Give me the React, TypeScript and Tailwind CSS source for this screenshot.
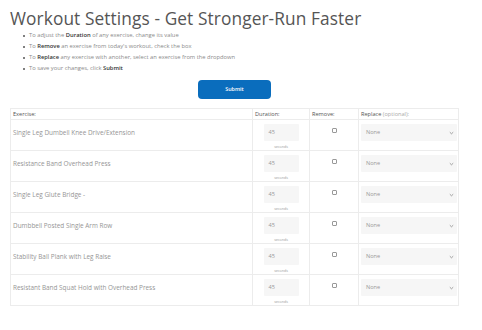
import React from 'react';

const exercises = [
  'Single Leg Dumbell Knee Drive/Extension',
  'Resistance Band Overhead Press',
  'Single Leg Glute Bridge -',
  'Dumbbell Posted Single Arm Row',
  'Stability Ball Plank with Leg Raise',
  'Resistant Band Squat Hold with Overhead Press',
];

const tips: [string, string, string][] = [
  ['To adjust the ', 'Duration', ' of any exercise, change its value'],
  ['To ', 'Remove', " an exercise from today's workout, check the box"],
  ['To ', 'Replace', ' any exercise with another, select an exercise from the dropdown'],
  ['To save your changes, click ', 'Submit', ''],
];

function Chevron() {
  return (
    <svg width="5" height="4" viewBox="0 0 5 4" className="shrink-0">
      <path d="M0.8 1.2 L2.5 2.8 L4.2 1.2" fill="none" stroke="#888" strokeWidth="0.8" />
    </svg>
  );
}

export default function App() {
  return (
    <div className="w-[482px] h-[330px] bg-white px-[10px] pt-[9px] font-['Open_Sans','Liberation_Sans',sans-serif]">
      <h1 className="text-[17.3px] leading-[20px] text-[#555] font-normal tracking-[0.1px]">
        Workout Settings - Get Stronger-Run Faster
      </h1>

      <ul className="mt-[1px] pl-[13px]">
        {tips.map(([a, b, c], i) => (
          <li key={i} className="flex items-center h-[11px] text-[5.8px] text-[#8a8a8a]">
            <span className="w-[2px] h-[2px] rounded-full bg-[#555] mr-[4px]" />
            <span>
              {a}
              <b className="font-semibold text-[#333]">{b}</b>
              {c}
            </span>
          </li>
        ))}
      </ul>

      <div className="flex justify-center mt-[6px] pr-[13px]">
        <button className="w-[73px] h-[19px] rounded-[4px] bg-[#0a6dbd] text-white text-[5.4px] font-semibold">
          Submit
        </button>
      </div>

      <table className="mt-[9px] w-[448px] border-collapse table-fixed">
        <colgroup>
          <col className="w-[242px]" />
          <col className="w-[57px]" />
          <col className="w-[49px]" />
          <col className="w-[100px]" />
        </colgroup>
        <thead>
          <tr className="h-[11px] text-[5.6px] text-[#555] text-left">
            <th className="border border-[#ececec] font-normal px-[2px] py-0">Exercise:</th>
            <th className="border border-[#ececec] font-normal px-[2px] py-0">Duration:</th>
            <th className="border border-[#ececec] font-normal px-[2px] py-0">Remove:</th>
            <th className="border border-[#ececec] font-normal px-[2px] py-0">
              Replace <span className="text-[#aaa]">(optional):</span>
            </th>
          </tr>
        </thead>
        <tbody>
          {exercises.map((name) => (
            <tr key={name} className="h-[31px] align-top">
              <td className="border border-[#ececec] px-[2px] pt-[9px] text-[6.4px] text-[#959595] leading-[7px]">
                {name}
              </td>
              <td className="border border-[#ececec] pt-[4px]">
                <div className="mx-auto w-[35px] h-[17px] bg-[#f6f6f6] rounded-[1px] flex items-center pl-[5px] text-[5.6px] text-[#999]">
                  45
                </div>
                <div className="text-center text-[3.6px] text-[#999] mt-[3px] leading-[5px]">seconds</div>
              </td>
              <td className="border border-[#ececec] pt-[8px]">
                <div className="mx-auto w-[5px] h-[5px] border-[0.7px] border-[#999] rounded-[1px]" />
              </td>
              <td className="border border-[#ececec] pt-[4px] px-[2px]">
                <div className="w-[96px] h-[17px] bg-[#f6f6f6] rounded-[1px] flex items-center justify-between pl-[5px] pr-[3px] text-[5.6px] text-[#999]">
                  <span>None</span>
                  <Chevron />
                </div>
              </td>
            </tr>
          ))}
        </tbody>
      </table>
    </div>
  );
}
